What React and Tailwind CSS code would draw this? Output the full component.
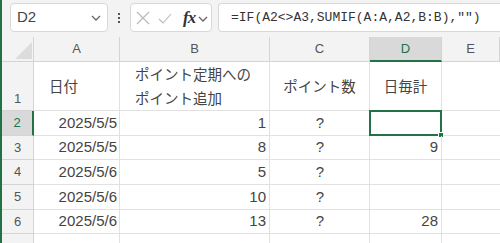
import React from "react";

const cols = ["A", "B", "C", "D", "E"];

const rows = [
  { n: 2, a: "2025/5/5", b: "1", c: "?", d: "", h: "h-[25px]" },
  { n: 3, a: "2025/5/5", b: "8", c: "?", d: "9", h: "h-[24px]" },
  { n: 4, a: "2025/5/6", b: "5", c: "?", d: "", h: "h-[25px]" },
  { n: 5, a: "2025/5/6", b: "10", c: "?", d: "", h: "h-[25px]" },
  { n: 6, a: "2025/5/6", b: "13", c: "?", d: "28", h: "h-[24px]" },
];

const widths = ["w-[86px]", "w-[150px]", "w-[100px]", "w-[72px]", "flex-1"];

function Chevron({ className }) {
  return (
    <svg width="10" height="6" viewBox="0 0 10 6" className={className}>
      <path d="M1 1 L5 5 L9 1" fill="none" stroke="#666" strokeWidth="1.3" />
    </svg>
  );
}

function Toolbar() {
  return (
    <div className="h-[37px] bg-[#f3f3f3] flex items-start pt-[3px] pl-[8px] font-['Liberation_Sans',sans-serif]">
      {/* name box */}
      <div className="w-[98px] h-[29px] rounded-[4px] border border-[#d8d8d8] bg-white flex items-center justify-between pl-[6px] pr-[6px]">
        <span className="text-[15px] text-[#444]">D2</span>
        <Chevron />
      </div>
      <div className="w-[22px] h-[29px] flex flex-col items-center justify-center gap-[2px]">
        <span className="w-[2px] h-[2px] bg-[#555]" />
        <span className="w-[2px] h-[2px] bg-[#555]" />
        <span className="w-[2px] h-[2px] bg-[#555]" />
      </div>
      {/* cancel / enter / fx */}
      <div className="w-[82px] h-[29px] rounded-[4px] border border-[#d8d8d8] bg-white flex items-center pl-[4px]">
        <svg width="14" height="14" viewBox="0 0 14 14" className="ml-[1px]">
          <path d="M1 1 L13 13 M13 1 L1 13" stroke="#b8b8b8" strokeWidth="1.1" fill="none" />
        </svg>
        <svg width="14" height="12" viewBox="0 0 14 12" className="ml-[8px] mt-[2px]">
          <path d="M1 6 L5 10 L13 1" stroke="#b8b8b8" strokeWidth="1.1" fill="none" />
        </svg>
        <span className="ml-[11px] text-[17px] leading-none italic font-bold text-[#333] font-['Liberation_Serif',serif] tracking-[-1px]">fx</span>
        <Chevron className="ml-[3px] mt-[2px]" />
      </div>
      {/* formula */}
      <div className="ml-[6px] flex-1 h-[29px] rounded-l-[4px] border border-r-0 border-[#d8d8d8] bg-white flex items-center pl-[12px] overflow-hidden">
        <span className="text-[13px] text-[#333] whitespace-nowrap font-['Liberation_Mono',monospace]">
          =IF(A2&lt;&gt;A3,SUMIF(A:A,A2,B:B),"")
        </span>
      </div>
    </div>
  );
}

export default function App() {
  const jp = "font-['Noto_Sans_CJK_JP',sans-serif]";
  const num = "font-['Liberation_Sans','Noto_Sans_CJK_JP',sans-serif]";
  return (
    <div className="w-[500px] h-[243px] overflow-hidden bg-white border-l-2 border-[#217346] flex flex-col">
      <Toolbar />

      {/* column headers */}
      <div className={`flex h-[25px] bg-[#f3f3f3] text-[13px] text-[#555] ${num}`}>
        <div className="w-[32px] border-r border-b border-[#d4d4d4] relative">
          <svg width="17" height="17" viewBox="0 0 17 17" className="absolute left-[13px] top-[5px]">
            <path d="M17 0 L17 17 L0 17 Z" fill="#dcdcdc" />
          </svg>
        </div>
        {cols.map((c, i) => (
          <div
            key={c}
            className={`${widths[i]} flex items-center justify-center ${
              c === "D"
                ? "bg-[#d9d9d9] text-[#217346] border-b-2 border-b-[#217346] border-r border-r-[#d4d4d4]"
                : "border-r border-b border-[#d4d4d4]"
            }`}
          >
            {c}
          </div>
        ))}
      </div>

      {/* row 1 */}
      <div className={`flex h-[49px] text-[14.5px] text-[#444] ${jp}`}>
        <div className={`w-[32px] bg-[#f3f3f3] border-r border-b border-[#d4d4d4] flex items-end justify-center pb-[2px] text-[13px] text-[#555] ${num}`}>
          1
        </div>
        <div className="w-[86px] border-r border-b border-[#e1e1e1] flex items-center pl-[15px]">日付</div>
        <div className="w-[150px] border-r border-b border-[#e1e1e1] flex flex-col justify-center pl-[15px] leading-[24px]">
          <span>ポイント定期への</span>
          <span>ポイント追加</span>
        </div>
        <div className="w-[100px] border-r border-b border-[#e1e1e1] flex items-center justify-center">ポイント数</div>
        <div className="w-[72px] border-r border-b border-[#e1e1e1] flex items-center justify-center">日毎計</div>
        <div className="flex-1 border-b border-[#e1e1e1]" />
      </div>

      {/* data rows */}
      {rows.map((r) => (
        <div key={r.n} className={`flex ${r.h} text-[15px] text-[#444] ${num}`}>
          <div
            className={`w-[32px] flex items-center justify-center text-[13px] ${
              r.n === 2
                ? "bg-[#d9d9d9] text-[#217346] border-r-2 border-r-[#217346] border-b border-b-[#d4d4d4]"
                : "bg-[#f3f3f3] text-[#555] border-r border-b border-[#d4d4d4]"
            }`}
          >
            {r.n}
          </div>
          <div className="w-[86px] border-r border-b border-[#e1e1e1] flex items-center justify-end pr-[2px]">{r.a}</div>
          <div className="w-[150px] border-r border-b border-[#e1e1e1] flex items-center justify-end pr-[3px]">{r.b}</div>
          <div className="w-[100px] border-r border-b border-[#e1e1e1] flex items-center justify-center pl-[1px]">{r.c}</div>
          <div className="w-[72px] border-r border-b border-[#e1e1e1] flex items-center justify-end pr-[3px] relative">
            {r.d}
            {r.n === 2 && (
              <div className="absolute -left-[1px] -top-[1px] -right-[1px] -bottom-[1px] border-2 border-[#217346]">
                <span className="absolute -right-[4px] -bottom-[4px] w-[6px] h-[6px] bg-[#217346] border border-white" />
              </div>
            )}
          </div>
          <div className="flex-1 border-b border-[#e1e1e1]" />
        </div>
      ))}

      {/* row 7 */}
      <div className="flex flex-1">
        <div className="w-[32px] bg-[#f3f3f3] border-r border-[#d4d4d4]" />
        <div className="w-[86px] border-r border-[#e1e1e1]" />
        <div className="w-[150px] border-r border-[#e1e1e1]" />
        <div className="w-[100px] border-r border-[#e1e1e1]" />
        <div className="w-[72px] border-r border-[#e1e1e1]" />
        <div className="flex-1" />
      </div>
    </div>
  );
}
